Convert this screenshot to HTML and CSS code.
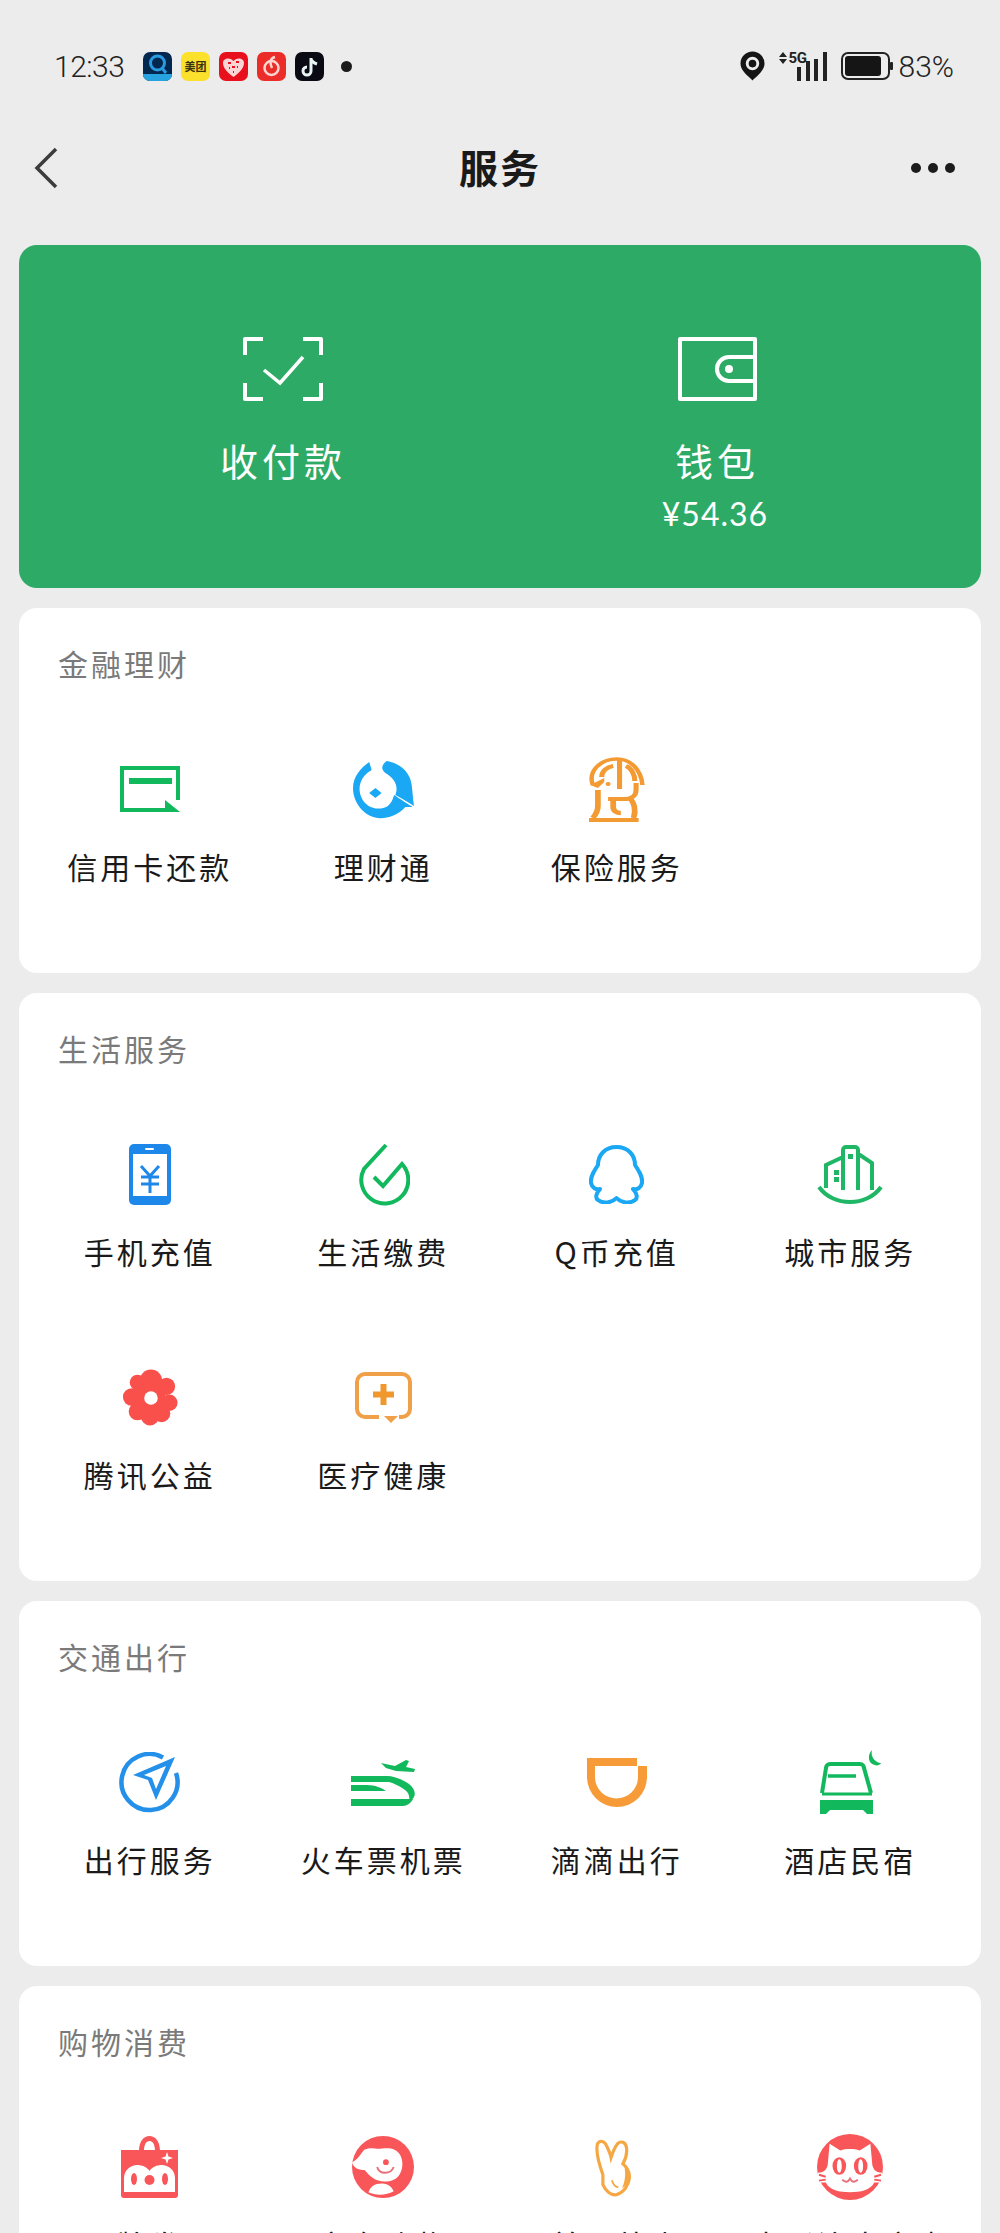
FILE: index.html
```html
<!DOCTYPE html>
<html lang="zh-CN">
<head>
	<meta charset="UTF-8">
	<title>服务</title>
	<link rel="stylesheet" href="styles.css">
</head>
<body>
	<div class="statusbar">
		<span class="time">12:33</span>
		<div class="notify">
			<svg width="29" height="29" viewBox="0 0 29 29"><rect width="29" height="29" rx="7" fill="#03284f"/><path d="M0 22h29v0a7 7 0 0 1-7 7H7a7 7 0 0 1-7-7Z" fill="#27a4e0"/><circle cx="14.500" cy="11" r="7" fill="none" stroke="#2a9be0" stroke-width="3"/><path d="M19 16l4 5" stroke="#2a9be0" stroke-width="3"/></svg>
			<svg width="29" height="29" viewBox="0 0 29 29"><rect width="29" height="29" rx="7" fill="#fbe02c"/><text x="14.500" y="19" class="mt">美团</text></svg>
			<svg width="29" height="29" viewBox="0 0 29 29"><rect width="29" height="29" rx="7" fill="#e8101c"/><path d="M14.500 25C8 20 4 16 4 11 4 6 11 5 14.500 9 18 5 25 6 25 11c0 5-4 9-10.500 14Z" fill="#fbd5d5"/><path d="M9 11h3M17 10h3M13 15h3M10 16h1M18 15h1M14 20h1" stroke="#e8101c" stroke-width="2"/></svg>
			<svg width="29" height="29" viewBox="0 0 29 29"><rect width="29" height="29" rx="7" fill="#ec2c28"/><circle cx="14.500" cy="16" r="7" fill="none" stroke="#fbd5d0" stroke-width="2.500"/><path d="M18 5c-4 1-6 4-3 11" fill="none" stroke="#fbd5d0" stroke-width="2.500"/></svg>
			<svg width="29" height="29" viewBox="0 0 29 29"><rect width="29" height="29" rx="7" fill="#0a0a14"/><path d="M16 6v13a4 4 0 1 1-4-4M16 7c1 3 3 4 6 5" fill="none" stroke="#e8f4f4" stroke-width="3"/></svg>
			<span class="dot"></span>
		</div>
		<div class="sysicons">
			<svg width="25" height="30" viewBox="0 0 26 30"><path d="M13 0a12.500 12.500 0 0 1 12.500 12.500C25.500 20 17 26 13 30 9 26 .5 20 .5 12.500A12.500 12.500 0 0 1 13 0Z" fill="#151515"/><circle cx="13" cy="12.500" r="5.500" fill="none" stroke="#ececec" stroke-width="3"/></svg>
			<div class="signal">
				<svg class="updown" width="8" height="12" viewBox="0 0 8 12"><path d="M4 0l4 5H0zM4 12l4-5H0z" fill="#222"/></svg>
				<span class="gen">5G</span>
				<svg class="bars" width="30" height="29" viewBox="0 0 30 29"><path d="M0 15h4v14H0zM9 9h4v20H9zM17 7h4v22h-4zM26 0h4v29h-4z" fill="#222"/></svg>
			</div>
			<svg width="52" height="28" viewBox="0 0 52 28"><rect x="1" y="1" width="47" height="26" rx="6" fill="none" stroke="#222" stroke-width="2"/><rect x="4" y="4" width="36" height="20" rx="3" fill="#151515"/><rect x="49" y="10" width="3" height="8" rx="1" fill="#222"/></svg>
			<span class="batt">83%</span>
		</div>
	</div>

	<div class="navbar">
		<div class="navside">
			<svg width="24" height="42" viewBox="0 0 24 42"><path d="M22 2 3 21l19 19" fill="none" stroke="#3c3c3c" stroke-width="3.500"/></svg>
		</div>
		<span class="navtitle">服务</span>
		<div class="navside more"><i></i><i></i><i></i></div>
	</div>

	<div class="paycard">
		<div class="payitem">
			<svg width="80" height="64" viewBox="0 0 80 64"><path d="M2 18V2h18M60 2h18v16M2 46v16h18M60 62h18V46" fill="none" stroke="#fff" stroke-width="4" stroke-linejoin="round"/><path d="M21 33l16 13 23-26" fill="none" stroke="#fff" stroke-width="3.500"/></svg>
			<div class="paylabel">收付款</div>
		</div>
		<div class="payitem">
			<svg width="79" height="64" viewBox="0 0 79 64"><path d="M2 2h75v60H2z" fill="none" stroke="#fff" stroke-width="4" stroke-linejoin="round"/><path d="M77 20H51a12 12 0 0 0 0 24h26" fill="none" stroke="#fff" stroke-width="4"/><circle cx="51" cy="32" r="4" fill="#fff"/></svg>
			<div class="paylabel">钱包</div>
			<div class="amount">¥54.36</div>
		</div>
	</div>

	<section class="card">
		<h2>金融理财</h2>
		<div class="grid">
			<div class="item">
				<div class="ic"><svg width="60" height="46" viewBox="0 0 60 46"><path d="M58 34V2H2v42h44" fill="none" stroke="#12b85c" stroke-width="4"/><rect x="9" y="12" width="43" height="6" fill="#12b85c"/><path d="M45 34l15 12H45z" fill="#12b85c"/></svg></div>
				<span>信用卡还款</span>
			</div>
			<div class="item">
				<div class="ic"><svg width="61" height="59" viewBox="0 0 49 59" preserveAspectRatio="none"><path d="M13 2l2 8C6 16 3 28 7 38c3 9 13 14 21 8 3-3 4-7 5-11 5 4 11 9 15 12h-6c-6 9-16 12-22 11C8 56 0 42 0 28 0 17 6 8 13 2Z" fill="#1aa8f5"/><path d="M27 1c11 2 19 12 20 23 1 8 1 14 2 22-5-4-10-8-15-11 3-9-1-17-8-22-3-3-4-7 1-12Z" fill="#1aa8f5"/><path d="M18 28l5 5-5 5-5-5Z" fill="#1aa8f5"/></svg></div>
				<span>理财通</span>
			</div>
			<div class="item">
				<div class="ic"><svg width="56" height="65" viewBox="0 0 44 65" preserveAspectRatio="none"><g fill="none" stroke="#f39a33"><path d="M3 28C-1 14 9 2 22 2c11 0 19 11 20 26" stroke-width="3.500"/><path d="M10 20c0-6 4-10 9-11M29 9c4 2 7 8 7 15M24 2v30M15 42h15c5-1 7-4 7-9v-7" stroke-width="4"/><path d="M7 33v16c0 5-2 9-4 12M31 40c5 5 6 14 4 21M19 42v8c0 4 3 6 6 6" stroke-width="4.500"/></g><path d="M1 28l11-7v4l-5 6ZM0 61h39v4H0Z" fill="#f39a33"/><circle cx="15" cy="27" r="2" fill="#f39a33"/></svg></div>
				<span>保险服务</span>
			</div>
		</div>
	</section>

	<section class="card">
		<h2>生活服务</h2>
		<div class="grid">
			<div class="item">
				<div class="ic"><svg width="42" height="61" viewBox="0 0 42 61"><rect width="42" height="61" rx="5" fill="#1e88ea"/><rect x="4" y="10" width="34" height="42" fill="#fff"/><rect x="16" y="4" width="9" height="2" rx="1" fill="#fff"/><path d="M12 22l9 10 9-10M12 33h18M12 40h18M21 32v17" fill="none" stroke="#1e88ea" stroke-width="3"/></svg></div>
				<span>手机充值</span>
			</div>
			<div class="item">
				<div class="ic"><svg width="53" height="63" viewBox="0 0 53 63"><path d="M29 2 7 26A23.500 23.500 0 1 0 45 21L26 43l-9-9" fill="none" stroke="#12b85c" stroke-width="4"/></svg></div>
				<span>生活缴费</span>
			</div>
			<div class="item">
				<div class="ic"><svg width="55" height="59" viewBox="0 0 55 59"><path d="M27.500 2C16 2 9 10 9 20 5 26 1 32 2 38c1 5 5 7 9 6-4 4-5 9-2 11 5 4 14 3 18.500-2C32 58 41 59 46 55c3-2 2-7-2-11 4 1 8-1 9-6 1-6-3-12-7-18C46 10 39 2 27.500 2Z" fill="none" stroke="#1aa8f5" stroke-width="4" stroke-linejoin="round"/></svg></div>
				<span>Q币充值</span>
			</div>
			<div class="item">
				<div class="ic"><svg width="66" height="59" viewBox="0 0 66 59"><path d="M9 43V20l17-8M26 45V5a3 3 0 0 1 3-3h9a3 3 0 0 1 3 3v40M41 10h2l12 8v27" fill="none" stroke="#1fb765" stroke-width="4"/><path d="M17 25h5v5h-5zM17 32h5v5h-5zM31 9h5v5h-5z" fill="#1fb765"/><path d="M2 42c7 10 19 15 31 15s24-5 31-15" fill="none" stroke="#1fb765" stroke-width="4"/></svg></div>
				<span>城市服务</span>
			</div>
			<div class="item">
				<div class="ic"><svg width="58" height="58" viewBox="0 0 60 60"><g fill="#f9504c"><circle cx="31" cy="13" r="11.500"/><circle cx="17" cy="15" r="8"/><circle cx="47" cy="19" r="9"/><circle cx="11" cy="30" r="9"/><circle cx="50" cy="36" r="8.500"/><circle cx="17" cy="45" r="9"/><circle cx="42" cy="47" r="9"/><circle cx="30" cy="50" r="9.500"/><circle cx="30" cy="30" r="16"/></g><circle cx="31" cy="31" r="7" fill="#fff"/></svg></div>
				<span>腾讯公益</span>
			</div>
			<div class="item">
				<div class="ic"><svg width="57" height="51" viewBox="0 0 57 51"><path d="M24 45H10a8 8 0 0 1-8-8V10a8 8 0 0 1 8-8h37a8 8 0 0 1 8 8v27a8 8 0 0 1-8 8H44" fill="none" stroke="#f0a048" stroke-width="4"/><path d="M29 44h14l-7 7Z" fill="#f0a048"/><path d="M28.500 12v21M18 22.500h21" fill="none" stroke="#f0972e" stroke-width="6"/></svg></div>
				<span>医疗健康</span>
			</div>
		</div>
	</section>

	<section class="card">
		<h2>交通出行</h2>
		<div class="grid">
			<div class="item">
				<div class="ic"><svg width="61" height="61" viewBox="0 0 61 61"><path d="M44 5.500A28 28 0 1 0 57 21" fill="none" stroke="#2590ea" stroke-width="4.500"/><path d="M56 5 14 23l15 5 8 20ZM47 14 25 23l8 3 4 11Z" fill="#2590ea" fill-rule="evenodd"/></svg></div>
				<span>出行服务</span>
			</div>
			<div class="item">
				<div class="ic"><svg width="64" height="47" viewBox="0 0 64 47"><path d="M30 4l14 3 11-6 3 1-3 6 9 2-1 3-18-1-10-3Z" fill="#12b85c"/><path d="M0 17h36c8 0 16 4 22 8 5 4 7 9 5 13-1 2-3 3-5 5 1-5 0-9-4-12-5-4-12-7-16-8H0Z" fill="#12b85c"/><path d="M0 26h16c8 0 15 3 19 6H0ZM0 40h62c-2 4-6 7-10 7H0Z" fill="#12b85c"/></svg></div>
				<span>火车票机票</span>
			</div>
			<div class="item">
				<div class="ic"><svg width="60" height="49" viewBox="0 0 60 49"><path d="M0 0h50v8h10v11a30 30 0 0 1-60 0ZM8 8v11a21.500 21.500 0 0 0 43 0V8Z" fill="#f79b38" fill-rule="evenodd"/></svg></div>
				<span>滴滴出行</span>
			</div>
			<div class="item">
				<div class="ic"><svg width="61" height="64" viewBox="0 0 61 64"><path d="M2 43 6 18a4 4 0 0 1 4-4h30a4 4 0 0 1 4 4l7 25" fill="none" stroke="#12b85c" stroke-width="4"/><path d="M8 26h28" fill="none" stroke="#12b85c" stroke-width="3.500"/><path d="M2 44h50" fill="none" stroke="#12b85c" stroke-width="3"/><path d="M0 50h53v14h-6l-4-4H10l-4 4H0Z" fill="#12b85c"/><path d="M52 0c-5 5-4 14 3 15 2 1 5 0 6-2-5 0-11-6-9-13Z" fill="#12b85c"/></svg></div>
				<span>酒店民宿</span>
			</div>
		</div>
	</section>

	<section class="card">
		<h2>购物消费</h2>
		<div class="grid">
			<div class="item">
				<div class="ic"><svg width="57" height="62" viewBox="0 0 57 62"><path d="M18 15C18 5 23 0 28.500 0S39 5 39 15h-5c0-6-2-10-5.500-10S23 9 23 15Z" fill="#f9565a"/><path d="M0 14h57v45a3 3 0 0 1-3 3H3a3 3 0 0 1-3-3Z" fill="#f9565a"/><path d="M3 56V42c0-8 7-13 13-13 5 0 10 2 12.500 6C31 31 36 29 41 29c6 0 13 5 13 13v14Z" fill="#fff"/><ellipse cx="13" cy="43" rx="3" ry="6" fill="#f9565a"/><ellipse cx="44" cy="43" rx="3" ry="6" fill="#f9565a"/><ellipse cx="28.500" cy="44" rx="5" ry="5" fill="#f9565a"/><path d="M46 16l1.500 4.500L52 22l-4.500 1.500L46 28l-1.500-4.500L40 22l4.500-1.500Z" fill="#fff"/></svg></div>
				<span>品牌发现</span>
			</div>
			<div class="item">
				<div class="ic"><svg width="62" height="64" viewBox="0 0 64 64"><circle cx="32" cy="32" r="32" fill="#f9565a"/><path d="M0 27c6-2 9-9 13-13 8-3 10 0 18-1 8-1 15 0 19 7 4 8 2 19-5 24-5 3-12 4-18 2-8-3-12-9-14-11-5 0-11-1-13-8Z" fill="#fff"/><path d="M17 58c2-6 6-9 14-9 7 0 10 4 12 8-7 4-18 5-26 1Z" fill="#fff"/><circle cx="35" cy="27" r="3" fill="#f9565a"/><path d="M26 32c2 8 14 8 17 0" fill="none" stroke="#e8707a" stroke-width="2"/></svg></div>
				<span>京东购物</span>
			</div>
			<div class="item">
				<div class="ic"><svg width="49" height="59" viewBox="0 0 54 64"><path d="M12 40C7 26 4 14 6 6c3-5 8-3 10 2 2 4 4 8 5 13 2-6 4-11 7-15 4-4 9-2 10 4 1 7-1 13-4 18 5 4 8 10 7 17-1 6-5 14-14 17-6 1-12-4-15-11Z" fill="none" stroke="#f4a742" stroke-width="3.500"/><path d="M34 26c6 5 8 12 7 18-1 5-4 9-8 11 4-8 5-20 1-29Z" fill="#f4a742"/><path d="M22 46c1 4 3 7 7 8" fill="none" stroke="#f4a742" stroke-width="2"/></svg></div>
				<span>美团外卖</span>
			</div>
			<div class="item">
				<div class="ic"><svg width="68" height="66" viewBox="0 0 68 68"><circle cx="34" cy="34" r="34" fill="#f9565a"/><path d="M13 10l11 7c6-2 14-2 20 0l11-7 2 22c1 4 3 8 10 8v10h-8c-4 8-14 10-25 10s-21-2-25-10H1V40c7 0 9-4 10-8Z" fill="#fff"/><ellipse cx="23" cy="33" rx="7" ry="9" fill="#f9565a"/><ellipse cx="45" cy="33" rx="7" ry="9" fill="#f9565a"/><ellipse cx="23" cy="33" rx="2.500" ry="7" fill="#fff"/><ellipse cx="45" cy="33" rx="2.500" ry="7" fill="#fff"/><path d="M26 47c3 3 6 3 8-1 2 4 5 4 8 1" fill="none" stroke="#e8707a" stroke-width="2"/><path d="M2 42l7 2M2 48l7-1M66 42l-7 2M66 48l-7-1" stroke="#f9565a" stroke-width="2"/></svg></div>
				<span>电影演出赛事</span>
			</div>
		</div>
	</section>
</body>
</html>
```

FILE: styles.css
```css
* {
	box-sizing: border-box;
}
html, body {
	height: 2233px;
	overflow: hidden;
}
body {
	margin: 0;
	background: #ececec;
	font-family: "Noto Sans CJK SC", "Noto Sans", sans-serif;
	color: #1a1a1a;
}
svg {
	display: block;
}
.statusbar {
	height: 132px;
	padding: 0 46px 0 54px;
	display: flex;
	align-items: center;
	justify-content: space-between;
}
.time, .batt {
	font-family: "Roboto", sans-serif;
	font-weight: 300;
	color: #222;
}
.time {
	font-size: 30px;
	letter-spacing: -0.5px;
}
.batt {
	font-size: 30px;
	margin-left: -8px;
}
.notify {
	display: flex;
	align-items: center;
	gap: 9px;
	margin-left: 19px;
	margin-right: auto;
}
.mt {
	font-size: 11px;
	font-weight: 700;
	fill: #3a3210;
	text-anchor: middle;
}
.dot {
	width: 11px;
	height: 11px;
	margin-left: 8px;
	border-radius: 50%;
	background: #1c1c1c;
}
.sysicons {
	display: flex;
	align-items: center;
	gap: 14px;
}
.signal {
	position: relative;
	width: 48px;
	height: 29px;
	display: flex;
	justify-content: flex-end;
}
.signal .gen {
	position: absolute;
	left: 10px;
	top: -1px;
	font-family: "Roboto", sans-serif;
	font-weight: 700;
	font-size: 15px;
	line-height: 15px;
	color: #222;
	letter-spacing: -0.5px;
}
.signal .updown {
	position: absolute;
	left: 0;
	top: 0;
}
.navbar {
	height: 72px;
	padding: 0 45px 0 34px;
	display: flex;
	align-items: center;
}
.navside {
	flex: 1;
}
.navtitle {
	font-size: 39px;
	line-height: 44px;
	font-weight: 700;
	letter-spacing: 2px;
	margin: 0 0 4px 11px;
}
.more {
	display: flex;
	justify-content: flex-end;
	gap: 7px;
}
.more i {
	width: 10px;
	height: 10px;
	border-radius: 50%;
	background: #1c1c1c;
}
.paycard {
	margin: 41px 19px 20px;
	height: 343px;
	border-radius: 18px;
	background: #2dab66;
	display: flex;
	justify-content: center;
	color: #fff;
}
.payitem {
	width: 434px;
	padding-top: 92px;
	display: flex;
	flex-direction: column;
	align-items: center;
}
.paylabel {
	margin-top: 31px;
	font-size: 38px;
	line-height: 56px;
	letter-spacing: 4px;
}
.amount {
	margin: 6px 4px 0 0;
	font-family: "Lato", sans-serif;
	font-size: 32px;
	line-height: 40px;
	letter-spacing: 1px;
}
.card {
	margin: 0 19px 20px;
	padding: 35px 14px 84px;
	border-radius: 18px;
	background: #fff;
}
.card h2 {
	margin: 0 0 0 25px;
	font-size: 30px;
	line-height: 40px;
	font-weight: 400;
	letter-spacing: 3px;
	color: #7a7a7a;
}
.grid {
	margin-top: 73px;
	display: grid;
	grid-template-columns: repeat(4, 1fr);
	row-gap: 90px;
}
.item {
	height: 133px;
	display: flex;
	flex-direction: column;
	align-items: center;
	font-size: 30px;
	letter-spacing: 3px;
	line-height: 40px;
}
.ic {
	height: 66px;
	margin-bottom: 24px;
	display: flex;
	align-items: center;
	justify-content: center;
}
```
